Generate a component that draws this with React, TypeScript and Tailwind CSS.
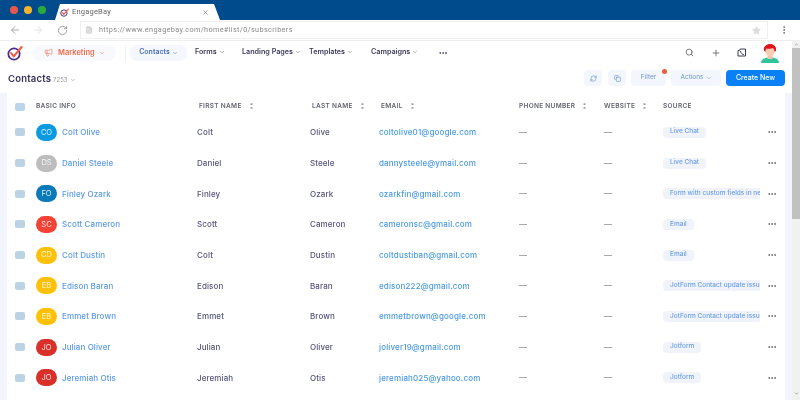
import { ArrowLeft, ArrowRight, RotateCw, File, Star, MoreVertical, MoreHorizontal, Search, Plus, ChevronDown, X, Megaphone, RefreshCw, Copy, ChevronUp } from "lucide-react";

const Logo = ({ s }: { s: number }) => (
  <svg width={s} height={s} viewBox="0 0 24 24" fill="none">
    <circle cx="10.5" cy="13.5" r="8.5" stroke="#4a2d8f" strokeWidth="2.6" />
    <path d="M6 12l4 5L22 3" stroke="#ef5a3c" strokeWidth="3" strokeLinecap="round" strokeLinejoin="round" />
  </svg>
);

const Avatar = () => (
  <svg width="20" height="20" viewBox="0 0 20 20">
    <path d="M1 20c0-4 4-5.500 9-5.500s9 1.500 9 5.500z" fill="#2fc59a" />
    <rect x="7.500" y="11" width="5" height="5" fill="#f6c3a8" />
    <circle cx="10" cy="8" r="5" fill="#f8cdb4" />
    <path d="M4 8c-1-5 3-7 6-7s7 2 6 7l-1.500.5c0-2-1-3-2-3.500-2 1-5 1-6 .500-1 1-1 2-1 3z" fill="#e0141c" />
  </svg>
);

const VideoPhone = () => (
  <svg width="10" height="9" viewBox="0 0 10 9" fill="none" stroke="#3d3a5c" strokeWidth="1">
    <path d="M1 2.500h1.500l.7-1.500h5.300v7H1z" strokeLinejoin="round" />
    <path d="M3.500 3.500c.2 1.500 1.200 2.500 3 3" strokeLinecap="round" />
  </svg>
);

const Sort = () => (
  <svg width="3" height="6" viewBox="0 0 3 6" fill="#777" className="-mt-[1.500px]">
    <rect x="0.500" y="0.500" width="2" height="1.200" />
    <rect x="0.500" y="4.300" width="2" height="1.200" />
  </svg>
);

type Row = { i: string; c: string; first: string; last: string; email: string; tag: string; clip?: boolean };
const rows: Row[] = [
  { i: "CO", c: "bg-[#0b9ae0]", first: "Colt", last: "Olive", email: "coltolive01@google.com", tag: "Live Chat" },
  { i: "DS", c: "bg-[#bdbdbd]", first: "Daniel", last: "Steele", email: "dannysteele@ymail.com", tag: "Live Chat" },
  { i: "FO", c: "bg-[#0a7ab8]", first: "Finley", last: "Ozark", email: "ozarkfin@gmail.com", tag: "Form with custom fields in new", clip: true },
  { i: "SC", c: "bg-[#f44336]", first: "Scott", last: "Cameron", email: "cameronsc@gmail.com", tag: "Email" },
  { i: "CD", c: "bg-[#ffc107]", first: "Colt", last: "Dustin", email: "coltdustiban@gmail.com", tag: "Email" },
  { i: "EB", c: "bg-[#ffc107]", first: "Edison", last: "Baran", email: "edison222@gmail.com", tag: "JotForm Contact update issue", clip: true },
  { i: "EB", c: "bg-[#ffc107]", first: "Emmet", last: "Brown", email: "emmetbrown@google.com", tag: "JotForm Contact update issue", clip: true },
  { i: "JO", c: "bg-[#d9302a]", first: "Julian", last: "Oliver", email: "joliver19@gmail.com", tag: "Jotform" },
  { i: "JO", c: "bg-[#d9302a]", first: "Jeremiah", last: "Otis", email: "jeremiah025@yahoo.com", tag: "Jotform" },
];

const cols = "grid grid-cols-[21px_163px_113px_69px_138px_85px_59px_97px_auto] items-center";

const Head = ({ t, sort }: { t: string; sort?: boolean }) => (
  <div className="flex items-center gap-[8px] text-[6.500px] font-semibold tracking-[0.3px] text-[#5f6470]">
    <span>{t}</span>
    {sort && <Sort />}
  </div>
);

const NavItem = ({ t, w, chev = true }: { t: string; w: string; chev?: boolean }) => (
  <div className={`flex items-center gap-[2px] text-[7.200px] font-semibold text-[#3d3a5c] ${w}`}>
    <span>{t}</span>
    {chev && <ChevronDown size={6} className="text-[#666]" />}
  </div>
);

export default function App() {
  return (
    <div className="w-[800px] h-[400px] overflow-hidden flex flex-col bg-white font-['Inter',sans-serif] blur-[0.35px]">
      {/* title bar */}
      <div className="h-[20px] shrink-0 bg-[#004b8c] flex items-end pl-[10px]">
        <div className="flex gap-[6px] h-full items-center w-[45px]">
          <span className="w-[8px] h-[8px] rounded-full bg-[#e9574a]" />
          <span className="w-[8px] h-[8px] rounded-full bg-[#f4b429]" />
          <span className="w-[8px] h-[8px] rounded-full bg-[#27ac3c]" />
        </div>
        <div className="w-[165px] h-[16px] bg-white flex items-center pl-[5px] pr-[12px] [clip-path:polygon(0_100%,5px_0,159px_0,165px_100%)]">
          <Logo s={9} />
          <span className="ml-[3px] text-[7.500px] text-[#666] font-['Roboto',sans-serif] tracking-[0.2px]">EngageBay</span>
          <X size={7} className="ml-auto mr-[-1px] text-[#666]" />
        </div>
      </div>
      {/* address bar */}
      <div className="h-[21px] shrink-0 bg-white border-b border-[#eeeeee] flex items-center pl-[9px]">
        <ArrowLeft size={12} className="text-[#aaa]" />
        <ArrowRight size={12} className="ml-[11px] text-[#e2e2e2]" />
        <RotateCw size={11} className="ml-[13px] text-[#999]" />
        <div className="ml-[12px] w-[688px] h-[18px] flex items-center border border-[#f0f0f0] pl-[4px] pr-[6px]">
          <File size={8} className="text-[#ccc] fill-[#ddd]" />
          <span className="ml-[6px] text-[7.300px] text-[#8a8a8a] tracking-[0.35px] font-['Roboto',sans-serif]">https://www.engagebay.com/home#list/0/subscribers</span>
          <Star size={9} className="ml-auto text-[#ddd] fill-[#ddd]" />
        </div>
        <MoreVertical size={10} className="ml-[11px] text-[#666]" />
      </div>

      <div className="flex-1 flex min-h-0">
        <div className="flex-1 min-w-0 flex flex-col bg-[#f2f5fe]">
          <div className="bg-white shrink-0">
            {/* nav */}
            <div className="h-[23px] flex items-center pl-[7px] pr-[12px]">
              <Logo s={16} />
              <div className="ml-[9px] w-[84px] h-[16px] rounded-[8px] bg-[#f7f9fd] flex items-center pl-[12px] gap-[4px] text-[7.500px] font-semibold text-[#ee6b50]">
                <Megaphone size={9} className="text-[#f08a75]" />
                <span className="ml-[1px]">Marketing</span>
                <ChevronDown size={6} />
              </div>
              <div className="ml-[9px] w-px h-[16px] bg-[#eef0f4]" />
              <div className="ml-[4px] w-[57px] h-[16px] rounded-[7px] bg-[#f4f7fc] flex items-center justify-center gap-[2px] text-[7px] font-semibold text-[#4a6fb0]">
                <span>Contacts</span>
                <ChevronDown size={6} />
              </div>
              <div className="ml-[8px]"><NavItem t="Forms" w="w-[47px]" /></div>
              <NavItem t="Landing Pages" w="w-[67px]" />
              <NavItem t="Templates" w="w-[62px]" />
              <NavItem t="Campaigns" w="w-[67px]" />
              <MoreHorizontal size={10} className="text-[#3d3a5c]" />
              <Search size={9} className="ml-auto text-[#555]" />
              <Plus size={10} className="ml-[17px] text-[#666]" />
              <div className="ml-[16px]"><VideoPhone /></div>
              <div className="ml-[13px]"><Avatar /></div>
            </div>
            {/* heading */}
            <div className="h-[29px] pt-[6px] flex items-start pl-[8px] pr-[7px]">
              <span className="mt-[1px] text-[9.500px] leading-[16px] font-semibold text-[#33335a] tracking-[0.2px]">Contacts</span>
              <span className="ml-[2px] mt-[1px] text-[6px] leading-[17px] text-[#999]">7253</span>
              <ChevronDown size={6} className="ml-[2px] mt-[7px] text-[#888]" />
              <div className="ml-auto flex items-center gap-[5px]">
                <div className="w-[18px] h-[16px] rounded-[4px] bg-[#f3f7fd] flex items-center justify-center"><RefreshCw size={7} className="text-[#5a8bc8]" /></div>
                <div className="ml-[1px] w-[18px] h-[16px] rounded-[4px] bg-[#f3f7fd] flex items-center justify-center"><Copy size={7} className="text-[#5a8bc8]" /></div>
                <div className="relative w-[35px] h-[16px] rounded-[4px] bg-[#f3f7fd] flex items-center justify-center text-[6.500px] text-[#6a94cc]">
                  Filter
                  <span className="absolute -top-[1px] right-[-1px] w-[5px] h-[5px] rounded-full bg-[#ee5a3a]" />
                </div>
                <div className="w-[50px] h-[16px] rounded-[4px] bg-[#f3f7fd] flex items-center justify-center gap-[2px] text-[6.500px] text-[#6a94cc]">
                  Actions <ChevronDown size={6} />
                </div>
                <div className="w-[59px] h-[16px] rounded-[4px] bg-[#0a80f5] flex items-center justify-center text-[7px] font-medium text-white">Create New</div>
              </div>
            </div>
          </div>
          {/* table */}
          <div className="flex-1 ml-[7px] mr-[7px] bg-white pl-[8px] pt-[3px] min-h-0">
            <div className={`${cols} h-[21px]`}>
              <span className="w-[10px] h-[8px] rounded-[2px] bg-[#bcd5ea]" />
              <Head t="BASIC INFO" />
              <Head t="FIRST NAME" sort />
              <Head t="LAST NAME" sort />
              <Head t="EMAIL" sort />
              <Head t="PHONE NUMBER" sort />
              <Head t="WEBSITE" sort />
              <Head t="SOURCE" />
              <span />
            </div>
            {rows.map((r) => (
              <div key={r.email} className={`${cols} h-[30.700px]`}>
                <span className="w-[10px] h-[8px] rounded-[2px] bg-[#bcd3e4]" />
                <div className="flex items-center gap-[5px]">
                  <span className={`w-[21px] h-[17px] rounded-full flex items-center justify-center text-[7.500px] text-white/85 ${r.c}`}>{r.i}</span>
                  <span className="text-[8px] font-medium tracking-[0.1px] text-[#5b9ae6]">{r.first} {r.last}</span>
                </div>
                <span className="-ml-[2px] text-[8px] font-medium tracking-[0.1px] text-[#55557a]">{r.first}</span>
                <span className="-ml-[2px] text-[8px] font-medium tracking-[0.1px] text-[#55557a]">{r.last}</span>
                <span className="-ml-[2px] text-[8px] font-medium tracking-[0.15px] text-[#4a9ae2]">{r.email}</span>
                <span className="w-[8px] h-px bg-[#aaa]" />
                <span className="w-[8px] h-px bg-[#aaa]" />
                <div className="overflow-hidden flex">
                  <span className={`flex h-[11px] items-center pl-[7px] pr-[7px] whitespace-nowrap text-[6.500px] font-medium text-[#6a9ee8] bg-[#f0f3f9] ${r.clip ? "rounded-l-[4px]" : "rounded-[4px]"}`}>{r.tag}</span>
                </div>
                <MoreHorizontal size={10} className="ml-[7px] text-[#555]" />
              </div>
            ))}
          </div>
        </div>
        {/* scrollbar */}
        <div className="w-[8px] shrink-0 bg-[#f1f1f1] flex flex-col items-center">
          <ChevronUp size={5} className="mt-[1px] text-[#555]" />
          <div className="mt-[1px] w-full h-[171px] bg-[#c1c1c1]" />
          <ChevronDown size={5} className="mt-auto mb-[4px] text-[#444]" />
        </div>
      </div>
    </div>
  );
}
